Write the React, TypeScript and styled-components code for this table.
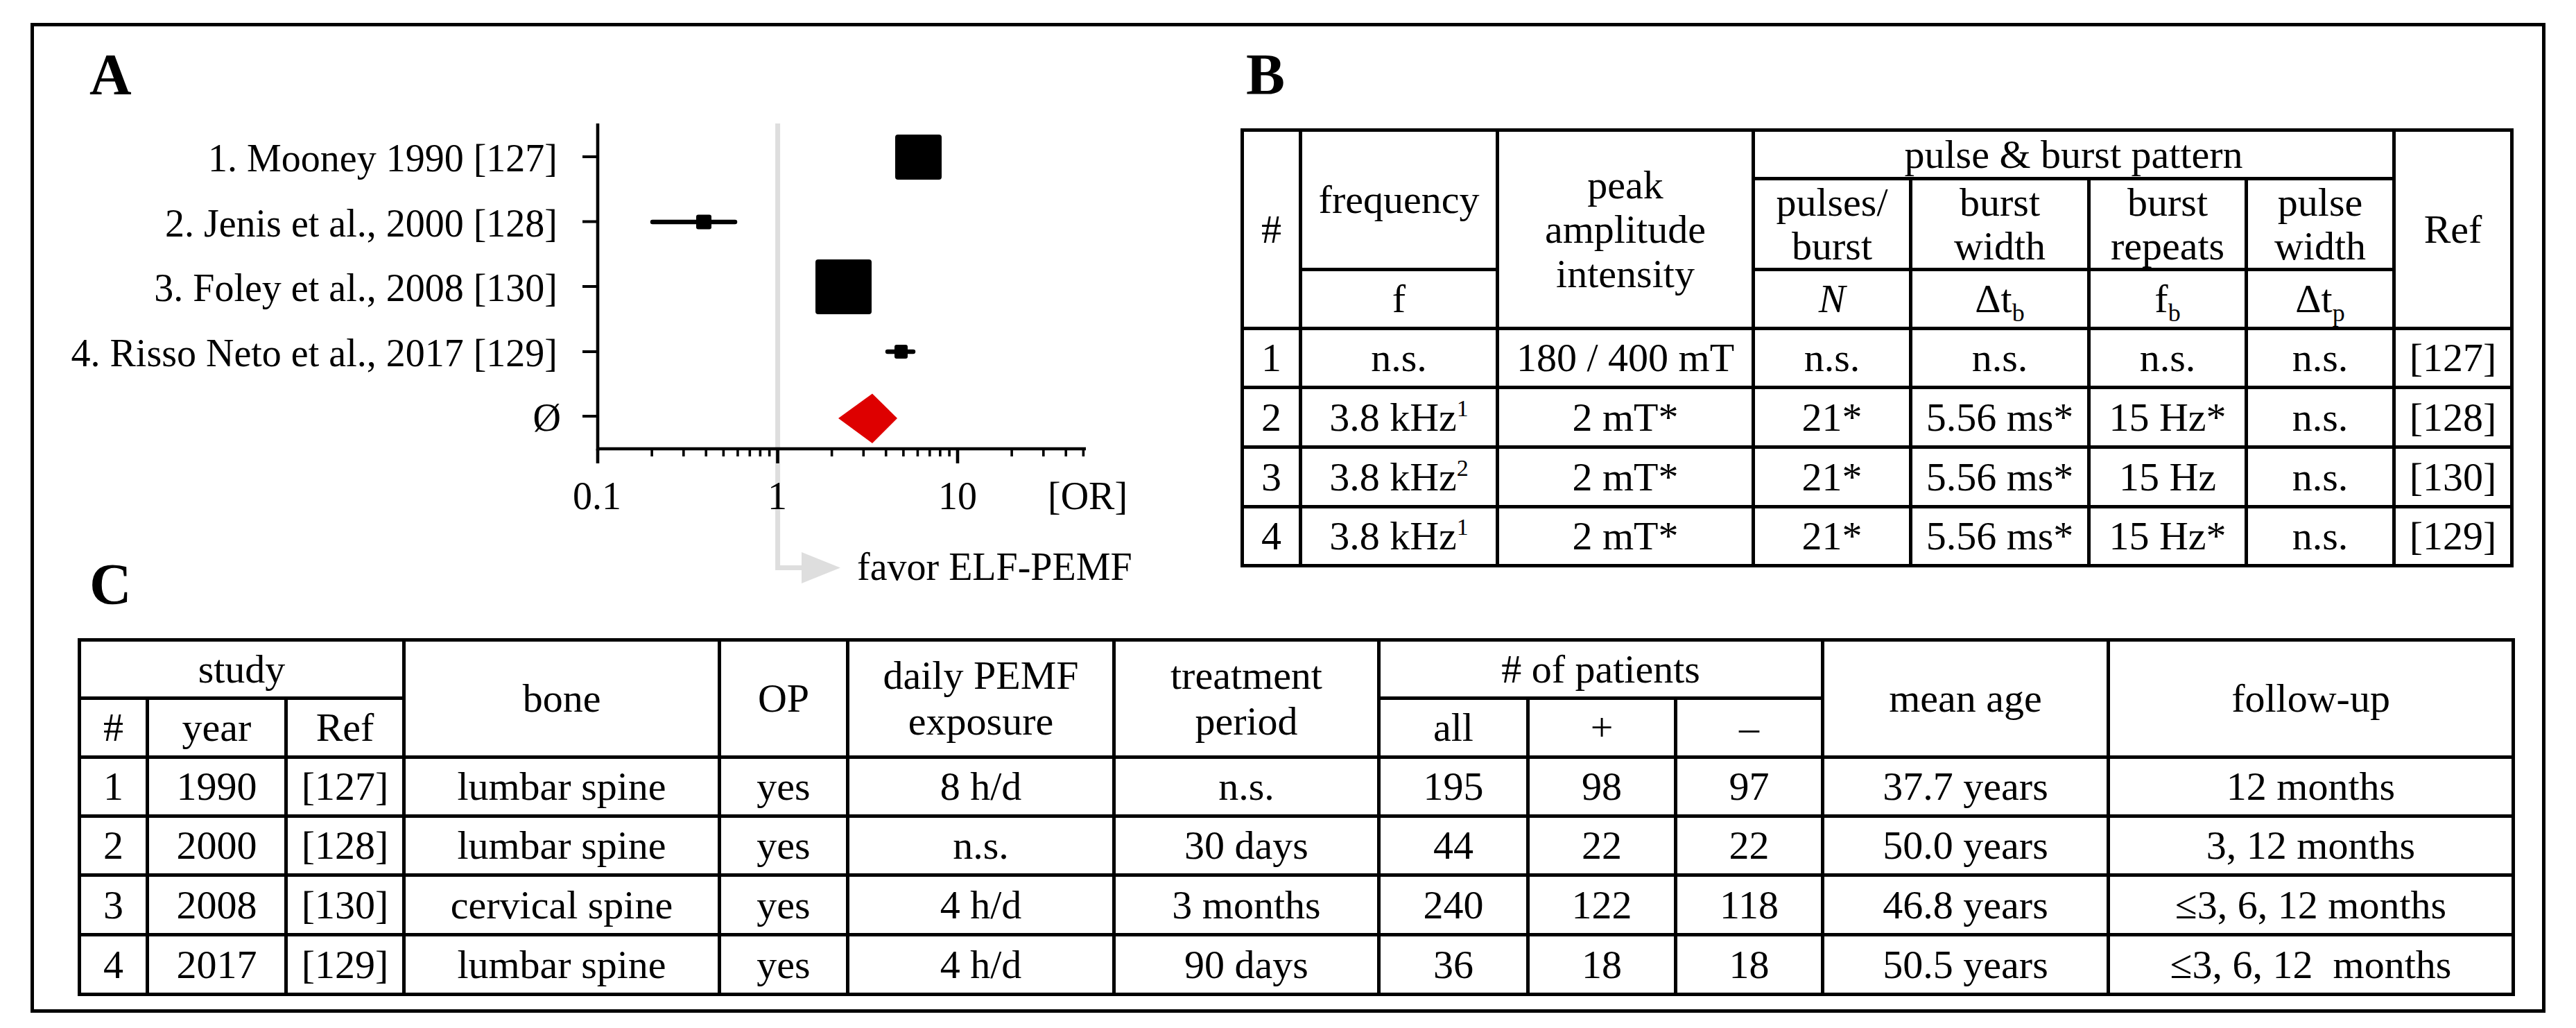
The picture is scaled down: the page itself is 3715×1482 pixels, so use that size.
import React from "react";
import styled, { createGlobalStyle } from "styled-components";

const serif = `"Liberation Serif", "Times New Roman", Times, serif`;

const GlobalStyle = createGlobalStyle`
  html, body { margin: 0; padding: 0; background: #ffffff; }
  body { width: 3715px; height: 1482px; overflow: hidden; }
`;

const Page = styled.div`
  box-sizing: border-box;
  width: 3715px;
  height: 1482px;
  padding: 33px 0 0 44px;
  background: #ffffff;
`;

const Frame = styled.div`
  box-sizing: border-box;
  width: 3627px;
  height: 1427px;
  border: 5px solid #000;
  display: grid;
  grid-template-columns: 1740px 1fr;
  grid-template-rows: 763px 84px auto;
  grid-template-areas:
    "a b"
    "c b"
    "t t";
`;

const Area = styled.div<{ $area: string }>`
  grid-area: ${(p) => p.$area};
  display: flex;
  flex-direction: column;
  align-items: flex-start;
  min-width: 0;
`;

const PanelLabel = styled.div<{ $top: number; $left: number }>`
  margin-top: ${(p) => p.$top}px;
  padding-left: ${(p) => p.$left}px;
  font-family: ${serif};
  font-weight: bold;
  font-size: 84px;
  line-height: 84px;
  height: 84px;
  color: #000;
`;

const ChartSvg = styled.svg`
  display: block;
  width: 1740px;
  height: 651px;
  overflow: visible;
`;

const ChartText = styled.text<{ $anchor?: string }>`
  font-family: ${serif};
  font-size: 56px;
  fill: #000;
  text-anchor: ${(p) => p.$anchor || "start"};
`;

const InkLine = styled.line<{ $w: number; $color?: string; $round?: boolean }>`
  stroke: ${(p) => p.$color || "#000"};
  stroke-width: ${(p) => p.$w}px;
  stroke-linecap: ${(p) => (p.$round ? "round" : "butt")};
`;

const Box = styled.rect`
  fill: #000;
`;

const GuidePath = styled.polyline`
  fill: none;
  stroke: #dedede;
  stroke-width: 7px;
`;

const GuideHead = styled.polygon`
  fill: #dedede;
`;

const Diamond = styled.polygon`
  fill: #de0000;
`;

const DataTable = styled.table<{ $w: number; $top: number; $left: number }>`
  box-sizing: border-box;
  width: ${(p) => p.$w}px;
  margin-top: ${(p) => p.$top}px;
  margin-left: ${(p) => p.$left}px;
  table-layout: fixed;
  border-collapse: separate;
  border-spacing: 0;
  border-top: 5px solid #000;
  border-left: 5px solid #000;
  font-family: ${serif};
  font-size: 58px;
  color: #000;
`;

const Col = styled.col<{ $w: number }>`
  width: ${(p) => p.$w}px;
`;

const Row = styled.tr<{ $h: number }>`
  height: ${(p) => p.$h}px;
`;

const Cell = styled.td<{ $lh?: number }>`
  box-sizing: border-box;
  padding: 0;
  border-right: 5px solid #000;
  border-bottom: 5px solid #000;
  text-align: center;
  vertical-align: middle;
  white-space: nowrap;
  font-weight: normal;
  line-height: ${(p) => (p.$lh ? `${p.$lh}px` : "1.1")};
`;

const Sup = styled.sup`
  font-size: 34px;
  line-height: 0;
  vertical-align: 21px;
`;

const Sub = styled.sub`
  font-size: 36px;
  line-height: 0;
  vertical-align: -13px;
`;

const Ital = styled.i`
  font-style: italic;
`;

/* ---------- Forest plot ---------- */

const X = (v: number) => 862 + 259.5 * Math.log10(v / 0.1);

const majors = [0.1, 1, 10];
const minors = [0.2, 0.3, 0.4, 0.5, 0.6, 0.7, 0.8, 0.9, 2, 3, 4, 5, 6, 7, 8, 9, 20, 30, 40, 50];

const studies = [
  { y: 226, label: "1. Mooney 1990 [127]", end: 804 },
  { y: 319.5, label: "2. Jenis et al., 2000 [128]", end: 804 },
  { y: 413, label: "3. Foley et al., 2008 [130]", end: 804 },
  { y: 507, label: "4. Risso Neto et al., 2017 [129]", end: 804 },
  { y: 600, label: "Ø", end: 809 },
];

function ForestPlot() {
  return (
    <ChartSvg viewBox="49 150 1740 651" xmlns="http://www.w3.org/2000/svg">
      <GuidePath points="1121.6,178 1121.6,818.5 1160,818.5" />
      <GuideHead points="1156,796 1212,818.5 1156,841" />

      <InkLine x1={862} y1={178} x2={862} y2={649.5} $w={4.6} />
      <InkLine x1={860} y1={647} x2={1566} y2={647} $w={4.6} />

      {studies.map((s) => (
        <InkLine key={`c${s.y}`} x1={840} y1={s.y} x2={862} y2={s.y} $w={4} />
      ))}
      {majors.map((v) => (
        <InkLine key={`M${v}`} x1={X(v)} y1={647} x2={X(v)} y2={668} $w={4.6} />
      ))}
      {minors.map((v) => (
        <InkLine key={`m${v}`} x1={X(v)} y1={647} x2={X(v)} y2={658} $w={3.6} />
      ))}

      {studies.map((s) => (
        <ChartText key={`l${s.y}`} x={s.end} y={s.y + 21} $anchor="end">
          {s.label}
        </ChartText>
      ))}

      <ChartText x={861} y={734} $anchor="middle">0.1</ChartText>
      <ChartText x={1121} y={734} $anchor="middle">1</ChartText>
      <ChartText x={1381} y={734} $anchor="middle">10</ChartText>
      <ChartText x={1511} y={734}>[OR]</ChartText>
      <ChartText x={1236} y={836}>favor ELF-PEMF</ChartText>

      <Box x={1291} y={194} width={67} height={65} rx={4} />

      <InkLine x1={941} y1={320} x2={1060} y2={320} $w={6.5} $round />
      <Box x={1004} y={309.5} width={22} height={21} rx={3} />

      <Box x={1176} y={374} width={81} height={79} rx={4} />

      <InkLine x1={1280} y1={507} x2={1317} y2={507} $w={6.5} $round />
      <Box x={1290} y={497} width={19} height={20} rx={3} />

      <Diamond points="1209,603 1258,567.5 1294,603 1258,639" />
    </ChartSvg>
  );
}

/* ---------- Table B ---------- */

const bCols = [84, 284, 369, 227, 257, 227, 213, 170];

const bRows: React.ReactNode[][] = [
  ["1", "n.s.", "180 / 400 mT", "n.s.", "n.s.", "n.s.", "n.s.", "[127]"],
  ["2", <>3.8 kHz<Sup>1</Sup></>, "2 mT*", "21*", "5.56 ms*", "15 Hz*", "n.s.", "[128]"],
  ["3", <>3.8 kHz<Sup>2</Sup></>, "2 mT*", "21*", "5.56 ms*", "15 Hz", "n.s.", "[130]"],
  ["4", <>3.8 kHz<Sup>1</Sup></>, "2 mT*", "21*", "5.56 ms*", "15 Hz*", "n.s.", "[129]"],
];
const bHeights = [85, 86, 86, 85];

function TableB() {
  return (
    <DataTable $w={1836} $top={35} $left={0}>
      <colgroup>
        {bCols.map((w, i) => (
          <Col key={i} $w={w} />
        ))}
      </colgroup>
      <thead>
        <Row $h={70}>
          <Cell as="th" rowSpan={3}>#</Cell>
          <Cell as="th" rowSpan={2}>frequency</Cell>
          <Cell as="th" rowSpan={3} $lh={64}>
            peak<br />amplitude<br />intensity
          </Cell>
          <Cell as="th" colSpan={4}>pulse &amp; burst pattern</Cell>
          <Cell as="th" rowSpan={3}>Ref</Cell>
        </Row>
        <Row $h={130}>
          <Cell as="th" $lh={63}>pulses/<br />burst</Cell>
          <Cell as="th" $lh={63}>burst<br />width</Cell>
          <Cell as="th" $lh={63}>burst<br />repeats</Cell>
          <Cell as="th" $lh={63}>pulse<br />width</Cell>
        </Row>
        <Row $h={85}>
          <Cell as="th">f</Cell>
          <Cell as="th"><Ital>N</Ital></Cell>
          <Cell as="th">Δt<Sub>b</Sub></Cell>
          <Cell as="th">f<Sub>b</Sub></Cell>
          <Cell as="th">Δt<Sub>p</Sub></Cell>
        </Row>
      </thead>
      <tbody>
        {bRows.map((r, i) => (
          <Row key={i} $h={bHeights[i]}>
            {r.map((c, j) => (
              <Cell key={j}>{c}</Cell>
            ))}
          </Row>
        ))}
      </tbody>
    </DataTable>
  );
}

/* ---------- Table C ---------- */

const cCols = [98, 200, 170, 455, 185, 384, 382, 215, 213, 212, 412, 584];

const cRows: string[][] = [
  ["1", "1990", "[127]", "lumbar spine", "yes", "8 h/d", "n.s.", "195", "98", "97", "37.7 years", "12 months"],
  ["2", "2000", "[128]", "lumbar spine", "yes", "n.s.", "30 days", "44", "22", "22", "50.0 years", "3, 12 months"],
  ["3", "2008", "[130]", "cervical spine", "yes", "4 h/d", "3 months", "240", "122", "118", "46.8 years", "≤3, 6, 12 months"],
  ["4", "2017", "[129]", "lumbar spine", "yes", "4 h/d", "90 days", "36", "18", "18", "50.5 years", "≤3, 6, 12\u00a0 months"],
];
const cHeights = [85, 85, 86, 86];

function TableC() {
  return (
    <DataTable $w={3515} $top={35} $left={63}>
      <colgroup>
        {cCols.map((w, i) => (
          <Col key={i} $w={w} />
        ))}
      </colgroup>
      <thead>
        <Row $h={84}>
          <Cell as="th" colSpan={3}>study</Cell>
          <Cell as="th" rowSpan={2}>bone</Cell>
          <Cell as="th" rowSpan={2}>OP</Cell>
          <Cell as="th" rowSpan={2} $lh={66}>daily PEMF<br />exposure</Cell>
          <Cell as="th" rowSpan={2} $lh={66}>treatment<br />period</Cell>
          <Cell as="th" colSpan={3}># of patients</Cell>
          <Cell as="th" rowSpan={2}>mean age</Cell>
          <Cell as="th" rowSpan={2}>follow-up</Cell>
        </Row>
        <Row $h={85}>
          <Cell as="th">#</Cell>
          <Cell as="th">year</Cell>
          <Cell as="th">Ref</Cell>
          <Cell as="th">all</Cell>
          <Cell as="th">+</Cell>
          <Cell as="th">–</Cell>
        </Row>
      </thead>
      <tbody>
        {cRows.map((r, i) => (
          <Row key={i} $h={cHeights[i]}>
            {r.map((c, j) => (
              <Cell key={j}>{c}</Cell>
            ))}
          </Row>
        ))}
      </tbody>
    </DataTable>
  );
}

export default function App() {
  return (
    <>
      <GlobalStyle />
      <Page>
        <Frame>
          <Area $area="a">
            <PanelLabel $top={28} $left={80}>A</PanelLabel>
            <ForestPlot />
          </Area>
          <Area $area="b">
            <PanelLabel $top={28} $left={8}>B</PanelLabel>
            <TableB />
          </Area>
          <Area $area="c">
            <PanelLabel $top={0} $left={80}>C</PanelLabel>
          </Area>
          <Area $area="t">
            <TableC />
          </Area>
        </Frame>
      </Page>
    </>
  );
}
